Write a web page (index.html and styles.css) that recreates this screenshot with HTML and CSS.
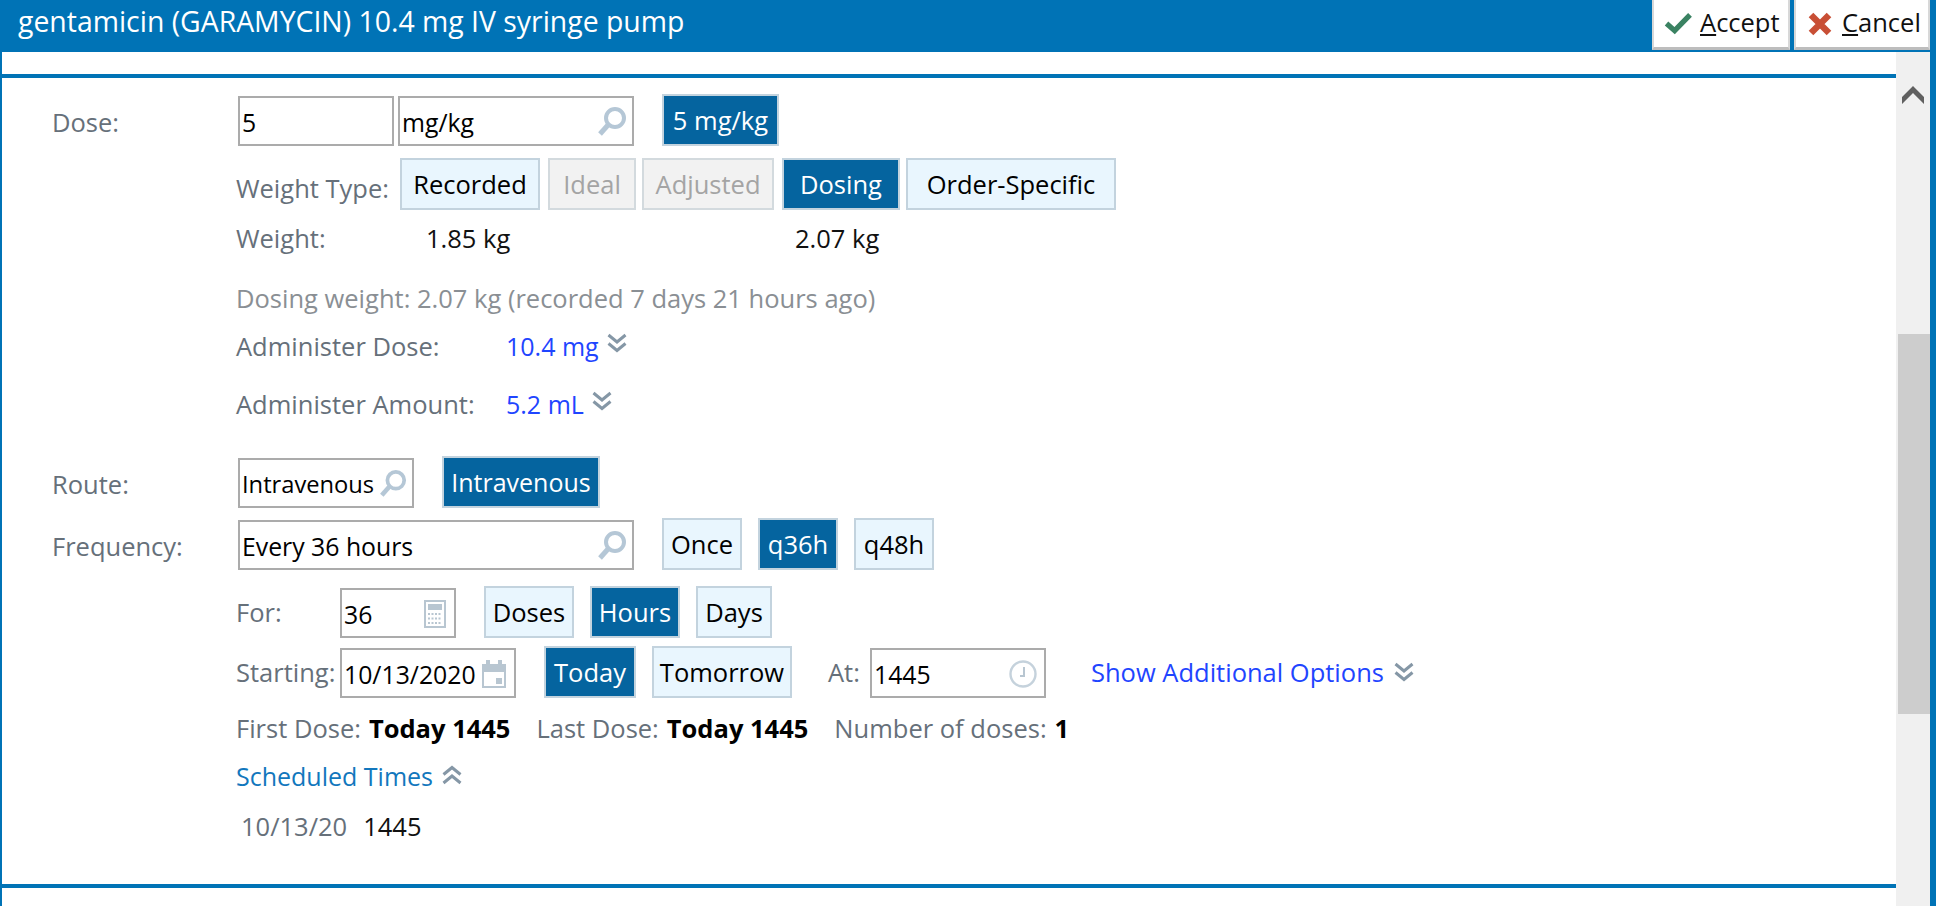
FILE: index.html
```html
<!DOCTYPE html>
<html lang="en">
<head>
<meta charset="utf-8">
<title>Order</title>
<link rel="stylesheet" href="styles.css">
</head>
<body>
<svg class="defs" width="0" height="0" aria-hidden="true">
  <symbol id="i-search" viewBox="0 0 30 30"><circle cx="18" cy="11" r="9" fill="none" stroke="#b5c7d6" stroke-width="4"/><path d="M11 18 3 27" stroke="#b5c7d6" stroke-width="5" fill="none"/></symbol>
  <symbol id="i-down" viewBox="0 0 20 20"><path d="M1.5 2l8.5 7 8.5-7M1.5 10.5l8.5 7 8.5-7" fill="none" stroke="#8597a6" stroke-width="3"/></symbol>
  <symbol id="i-up" viewBox="0 0 20 20"><path d="M1.5 9.5l8.5-7 8.5 7M1.5 18l8.5-7 8.5 7" fill="none" stroke="#8597a6" stroke-width="3"/></symbol>
</svg>
<div class="window">
  <header class="titlebar">
    <div class="title">gentamicin (GARAMYCIN) 10.4 mg IV syringe pump</div>
    <button class="action accept"><svg class="act-icon" viewBox="0 0 30 24"><path d="M2.5 12 11 19.5 27 3" fill="none" stroke="#3a8262" stroke-width="5.5"/></svg><span><u>A</u>ccept</span></button>
    <button class="action cancel"><svg class="act-icon" viewBox="0 0 24 24"><path d="M3 3l18 18M21 3 3 21" stroke="#c84f35" stroke-width="6.5" fill="none"/></svg><span><u>C</u>ancel</span></button>
  </header>
  <div class="body">
    <main class="content">
      <div class="panel">
        <div class="row field r-dose">
          <div class="label">Dose:</div>
          <div class="input w-156"><span>5</span></div>
          <div class="input w-236 ml-4"><span>mg/kg</span><svg class="ic"><use href="#i-search"/></svg></div>
          <div class="btn on ml-28 w-117">5 mg/kg</div>
        </div>
        <div class="row sub r-wtype">
          <div class="sublabel w-164 low">Weight Type:</div>
          <div class="btn w-140">Recorded</div>
          <div class="btn off w-88 ml-8">Ideal</div>
          <div class="btn off w-132 ml-6">Adjusted</div>
          <div class="btn on w-118 ml-8">Dosing</div>
          <div class="btn w-210 ml-6">Order-Specific</div>
        </div>
        <div class="row sub r-weight">
          <div class="sublabel w-190">Weight:</div>
          <div class="val w-369">1.85 kg</div>
          <div class="val">2.07 kg</div>
        </div>
        <div class="row sub note r-note">Dosing weight: 2.07 kg (recorded 7 days 21 hours ago)</div>
        <div class="row sub r-adm1">
          <div class="sublabel w-270">Administer Dose:</div>
          <div class="link small">10.4 mg</div>
          <svg class="chev"><use href="#i-down"/></svg>
        </div>
        <div class="row sub r-adm2">
          <div class="sublabel w-270">Administer Amount:</div>
          <div class="link small">5.2 mL</div>
          <svg class="chev"><use href="#i-down"/></svg>
        </div>
        <div class="row field r-route">
          <div class="label">Route:</div>
          <div class="input w-176 tight"><span>Intravenous</span><svg class="ic"><use href="#i-search"/></svg></div>
          <div class="btn on w-158 ml-28 small">Intravenous</div>
        </div>
        <div class="row field r-freq">
          <div class="label">Frequency:</div>
          <div class="input w-396"><span>Every 36 hours</span><svg class="ic"><use href="#i-search"/></svg></div>
          <div class="btn w-80 ml-28">Once</div>
          <div class="btn on w-80 ml-16">q36h</div>
          <div class="btn w-80 ml-16">q48h</div>
        </div>
        <div class="row field sub r-for">
          <div class="sublabel w-104">For:</div>
          <div class="input w-116"><span>36</span>
            <svg class="ic ic-calc" viewBox="0 0 22 28"><rect x="1" y="1" width="20" height="26" fill="#fff" stroke="#b8c6d1" stroke-width="2"/><rect x="4" y="4" width="14" height="6" fill="#b8c6d1"/><path d="M4 14h14M4 18.500h14M4 23h14" stroke="#b8c6d1" stroke-width="2" stroke-dasharray="2 1.500"/></svg></div>
          <div class="btn w-90 ml-28">Doses</div>
          <div class="btn on w-90 ml-16">Hours</div>
          <div class="btn w-76 ml-16">Days</div>
        </div>
        <div class="row field sub r-start">
          <div class="sublabel w-104">Starting:</div>
          <div class="input w-176"><span>10/13/2020</span>
            <svg class="ic ic-cal" viewBox="0 0 24 28"><path d="M4 0h4v4h8V0h4v4h4v24H0V4h4z" fill="#b8c6d1"/><rect x="2" y="12" width="20" height="14" fill="#fff"/><rect x="14" y="18" width="6" height="6" fill="#b8c6d1"/></svg></div>
          <div class="btn on w-92 ml-28">Today</div>
          <div class="btn w-140 ml-16">Tomorrow</div>
          <div class="sublabel w-42 ml-36">At:</div>
          <div class="input w-176"><span>1445</span>
            <svg class="ic ic-clock" viewBox="0 0 28 28"><circle cx="14" cy="14" r="12.500" fill="none" stroke="#c5d2dc" stroke-width="2.400"/><path d="M15 7v9h-4" fill="none" stroke="#b8c6d1" stroke-width="2"/></svg></div>
          <div class="link ml-45 self-center">Show Additional Options</div>
          <svg class="chev chev-opt self-center"><use href="#i-down"/></svg>
        </div>
        <div class="row sub r-sum">
          <span class="sublabel">First Dose:</span><b class="bold ml-8">Today 1445</b>
          <span class="sublabel ml-26">Last Dose:</span><b class="bold ml-8">Today 1445</b>
          <span class="sublabel ml-26">Number of doses:</span><b class="bold ml-8">1</b>
        </div>
        <div class="row sub r-sched">
          <div class="sched small">Scheduled Times</div>
          <svg class="chev chev-up"><use href="#i-up"/></svg>
        </div>
        <div class="row sub r-times">
          <span class="sublabel ml-5">10/13/20</span><span class="val ml-16">1445</span>
        </div>
      </div>
    </main>
    <aside class="scrollbar">
      <svg class="sb-arrow" viewBox="0 0 22 18"><path d="M11 0 22 11v7L11 7 0 18v-7z" fill="#606060"/></svg>
      <div class="sb-thumb"></div>
    </aside>
  </div>
</div>
</body>
</html>
```
FILE: styles.css
```css
* { box-sizing: border-box; }
html, body { margin: 0; padding: 0; height: 100%; overflow: hidden; background: #fff; }
body { font-family: "Open Sans", "Noto Sans", sans-serif; font-size: 25.5px; color: #000; }
.defs { position: absolute; }
.window { height: 906px; width: 1936px; display: flex; flex-direction: column; border-left: 2px solid #0073b6; border-right: 6px solid #0073b6; }
.titlebar { height: 52px; flex: none; background: #0073b6; display: flex; align-items: flex-start; margin-left: -2px; padding-left: 18px; }
.title { flex: 1; color: #fff; font-size: 28.4px; line-height: 42px; white-space: nowrap; }
.action { height: 50px; border: 0; border-left: 2px solid #d8d8d8; border-right: 2px solid #d8d8d8; border-bottom: 3px solid #bdbdbd; background: #fff; font: inherit; color: #111; display: flex; align-items: center; justify-content: flex-start; }
.action span { margin-top: -3px; }
.accept { width: 138px; margin-right: 4px; padding: 0 0 0 10px; gap: 7px; }
.cancel { width: 136px; padding: 0 0 0 12px; gap: 10px; }
.act-icon { width: 29px; height: 23px; flex: none; }
.cancel .act-icon { width: 24px; height: 24px; }
.body { flex: 1; display: flex; min-height: 0; }
.content { flex: 1; padding-top: 22px; }
.panel { height: 814px; border-top: 4px solid #0073b6; border-bottom: 4px solid #0073b6; padding-top: 16px; padding-left: 50px; }
.row { display: flex; align-items: center; white-space: nowrap; }
.field { align-items: flex-end; }
.field .label, .field .sublabel, .self-center { align-self: center; }
.sub { padding-left: 184px; }
.label { width: 186px; color: #66707a; flex: none; margin-top: 4px; }
.sublabel { color: #66707a; flex: none; }
.low { margin-top: 8px; }
.val { color: #111; flex: none; }
.note { color: #8a8f94; }
.link { color: #1f45ff; }
.sched { color: #1277bd; }
.small { font-size: 25px; }
.bold { font-weight: 700; color: #000; }
.input { height: 50px; flex: none; border: 2px solid #ababab; background: #fff; display: flex; align-items: center; justify-content: space-between; padding: 2px 5px 0 2px; font-size: 24.8px; }
.tight { font-size: 23.7px; }
.btn { height: 52px; flex: none; border: 2px solid #c3d3de; background: #e9f6fe; color: #000; display: flex; align-items: center; justify-content: center; }
.btn.on { background: #05649f; color: #fff; }
.btn.off { background: #f2f2f2; color: #a4a4a4; border-color: #d3dade; }
.ic { width: 30px; height: 30px; flex: none; }
.tight .ic { width: 28px; height: 28px; margin-left: -4px; }
.ic-calc { width: 22px; height: 28px; margin-right: 3px; }
.ic-cal { width: 24px; height: 28px; margin-right: 3px; }
.ic-clock { width: 28px; height: 28px; margin-right: 2px; }
.chev { width: 20px; height: 20px; flex: none; margin-left: 8px; margin-top: -6px; }
.chev-opt { margin-left: 9px; width: 22px; margin-top: 0; }
.chev-up { margin-left: 9px; margin-top: -3px; }
.r-dose { height: 52px; }
.r-wtype { height: 52px; margin-top: 12px; }
.r-weight { margin-top: 10px; height: 36px; }
.r-note { margin-top: 24px; height: 36px; }
.r-adm1 { margin-top: 10px; height: 40px; }
.r-adm2 { margin-top: 18px; height: 40px; }
.r-route { margin-top: 32px; height: 52px; }
.r-freq { margin-top: 10px; height: 52px; }
.r-for { margin-top: 16px; height: 52px; }
.r-start { margin-top: 8px; height: 52px; }
.r-sum { margin-top: 12px; height: 36px; }
.r-sched { margin-top: 12px; height: 36px; }
.r-times { margin-top: 14px; height: 36px; }
.w-42 { width: 42px; } .w-76 { width: 76px; } .w-80 { width: 80px; } .w-88 { width: 88px; } .w-90 { width: 90px; } .w-92 { width: 92px; }
.w-104 { width: 104px; } .w-116 { width: 116px; } .w-117 { width: 117px; } .w-118 { width: 118px; } .w-132 { width: 132px; }
.w-140 { width: 140px; } .w-156 { width: 156px; } .w-158 { width: 158px; } .w-164 { width: 164px; } .w-176 { width: 176px; } .w-190 { width: 190px; }
.w-210 { width: 210px; } .w-236 { width: 236px; } .w-270 { width: 270px; } .w-369 { width: 369px; } .w-396 { width: 396px; }
.ml-4 { margin-left: 4px; } .ml-5 { margin-left: 5px; } .ml-6 { margin-left: 6px; } .ml-8 { margin-left: 8px; } .ml-16 { margin-left: 16px; } .ml-26 { margin-left: 26px; } .ml-28 { margin-left: 28px; } .ml-36 { margin-left: 36px; } .ml-45 { margin-left: 45px; }
.scrollbar { width: 34px; flex: none; background: #f0f0f0; display: flex; flex-direction: column; align-items: center; padding-top: 34px; }
.sb-arrow { width: 22px; height: 18px; flex: none; }
.sb-thumb { width: 32px; height: 380px; background: #cdcdcd; margin-top: 230px; align-self: flex-end; }
```
